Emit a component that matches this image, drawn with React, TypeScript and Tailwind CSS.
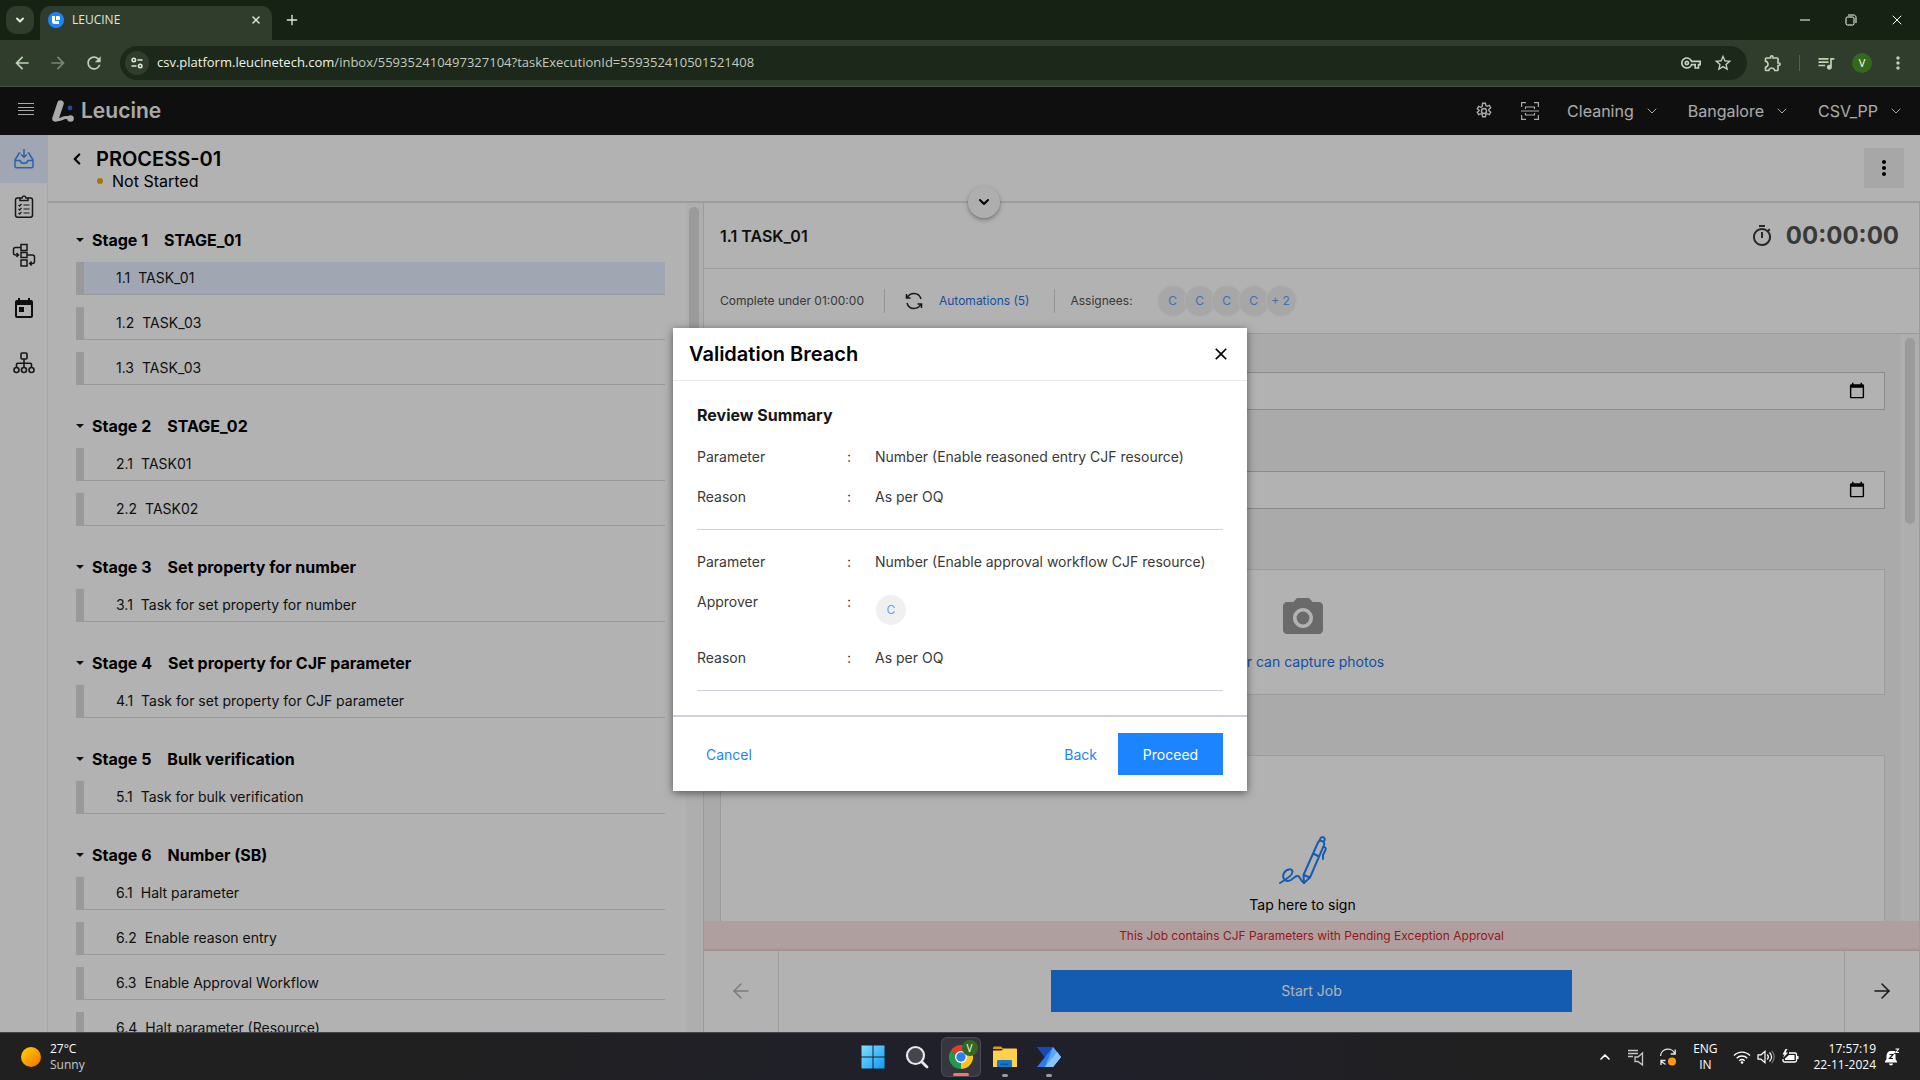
import { ReactNode } from "react";
import clsx from "clsx";
import {
  MdArrowBack,
  MdArrowForward,
  MdCameraAlt,
  MdClose,
  MdMoreVert,
  MdOutlineExtension,
  MdOutlineTimer,
  MdOutlineVpnKey,
  MdQueueMusic,
  MdRefresh,
  MdStarOutline,
  MdToday,
} from "react-icons/md";
import { ArrowLeft, ArrowRight, ChevronDown, ChevronLeft, ChevronUp, Minus, Plus, X } from "lucide-react";

type Task = { id: string; name: string };
type Stage = { title: string; name: string; tasks: Task[] };

const STAGES: Stage[] = [
  {
    title: "Stage 1",
    name: "STAGE_01",
    tasks: [
      { id: "1.1", name: "TASK_01" },
      { id: "1.2", name: "TASK_03" },
      { id: "1.3", name: "TASK_03" },
    ],
  },
  {
    title: "Stage 2",
    name: "STAGE_02",
    tasks: [
      { id: "2.1", name: "TASK01" },
      { id: "2.2", name: "TASK02" },
    ],
  },
  {
    title: "Stage 3",
    name: "Set property for number",
    tasks: [{ id: "3.1", name: "Task for set property for number" }],
  },
  {
    title: "Stage 4",
    name: "Set property for CJF parameter",
    tasks: [{ id: "4.1", name: "Task for set property for CJF parameter" }],
  },
  {
    title: "Stage 5",
    name: "Bulk verification",
    tasks: [{ id: "5.1", name: "Task for bulk verification" }],
  },
  {
    title: "Stage 6",
    name: "Number (SB)",
    tasks: [
      { id: "6.1", name: "Halt parameter" },
      { id: "6.2", name: "Enable reason entry" },
      { id: "6.3", name: "Enable Approval Workflow" },
      { id: "6.4", name: "Halt parameter (Resource)" },
    ],
  },
];

const ASSIGNEES = ["C", "C", "C", "C", "+ 2"];

function TabStrip() {
  return (
    <div className="flex h-10 items-end bg-[#162213] text-[#dfe8da]">
      <button
        type="button"
        aria-label="Search tabs"
        className="mb-[6px] ml-[6px] flex size-7 items-center justify-center rounded-[10px] bg-[#303d2d]"
      >
        <ChevronDown className="size-3" strokeWidth={4} />
      </button>
      <div className="ml-[6px] flex h-[34px] w-[232px] items-center rounded-t-[10px] bg-[#303d2d] pr-2 pb-[6px] pl-2">
        <svg viewBox="0 0 16 16" className="size-4">
          <circle cx="8" cy="8" r="8" fill="#1d84ff" />
          <path d="M4 4h3v5h4v3H6.500C5 12 4 11 4 9.500z" fill="#fff" />
          <path d="M8 4h2.200C11.500 4 12 4.600 12 6v2H8z" fill="#fff" />
        </svg>
        <span className="ml-2 flex-1 text-[12px]">LEUCINE</span>
        <button type="button" aria-label="Close tab" className="flex size-4 items-center justify-center">
          <X className="size-3" strokeWidth={3} />
        </button>
      </div>
      <button type="button" aria-label="New tab" className="mb-3 ml-3 flex size-4 items-center justify-center">
        <Plus className="size-4" strokeWidth={2} />
      </button>
      <div className="ml-auto flex h-10 items-center text-white">
        <button type="button" aria-label="Minimize" className="flex w-[46px] justify-center">
          <Minus className="size-4" strokeWidth={1.5} />
        </button>
        <button type="button" aria-label="Restore" className="flex w-[46px] justify-center">
          <svg viewBox="0 0 12 12" className="size-3" fill="none" stroke="currentColor" strokeWidth="1">
            <rect x="1" y="3" width="8" height="8" rx="1.500" />
            <path d="M3 1h5.500C10 1 11 2 11 3.500V9" />
          </svg>
        </button>
        <button type="button" aria-label="Close window" className="flex w-[46px] justify-center">
          <X className="size-4" strokeWidth={1.5} />
        </button>
      </div>
    </div>
  );
}

function Toolbar() {
  return (
    <div className="flex h-[47px] items-center border-b border-[#465343] bg-[#303d2d] pr-3 pl-3 text-[#bdd3b4]">
      <div className="flex items-center gap-4">
        <button type="button" aria-label="Back">
          <MdArrowBack className="size-5" />
        </button>
        <button type="button" aria-label="Forward" className="opacity-50">
          <MdArrowForward className="size-5" />
        </button>
        <button type="button" aria-label="Reload">
          <MdRefresh className="size-5" />
        </button>
      </div>
      <div className="ml-4 flex h-[34px] flex-1 items-center rounded-full bg-[#1c2819] pr-[14px] pl-[5px]">
        <button
          type="button"
          aria-label="View site information"
          className="flex size-6 items-center justify-center rounded-full bg-[#303d2d]"
        >
          <svg viewBox="0 0 14 14" className="size-[14px]" fill="none" stroke="#dfe8da" strokeWidth="1.600">
            <circle cx="3.800" cy="4" r="1.700" />
            <path d="M7.500 4h5M1.500 10h5" />
            <circle cx="10.200" cy="10" r="1.700" />
          </svg>
        </button>
        <p className="ml-2 flex-1 text-[13px] text-[#c3cbbf]">
          <span className="text-[#eef3ea]">csv.platform.leucinetech.com</span>
          /inbox/559352410497327104?taskExecutionId=559352410501521408
        </p>
        <div className="flex items-center gap-3 text-[#c6d2c0]">
          <button type="button" aria-label="Manage passwords">
            <MdOutlineVpnKey className="size-5" />
          </button>
          <button type="button" aria-label="Bookmark this tab">
            <MdStarOutline className="size-5" />
          </button>
        </div>
      </div>
      <div className="flex items-center pl-4">
        <button type="button" aria-label="Extensions">
          <MdOutlineExtension className="size-5" />
        </button>
        <span className="mx-4 h-4 w-px bg-[#51634c]" />
        <button type="button" aria-label="Media controls">
          <MdQueueMusic className="size-5" />
        </button>
        <button
          type="button"
          aria-label="Profile"
          className="mx-4 flex size-5 items-center justify-center rounded-full bg-[#33691e] text-[11px] text-white"
        >
          V
        </button>
        <button type="button" aria-label="Browser menu">
          <MdMoreVert className="size-5" />
        </button>
      </div>
    </div>
  );
}

function HeaderMenu({ label }: { label: string }) {
  return (
    <button type="button" className="flex items-center gap-[10px] text-[16px]">
      {label}
      <ChevronDown className="size-4" strokeWidth={1.5} />
    </button>
  );
}

function AppHeader() {
  return (
    <header className="flex h-12 shrink-0 items-center bg-[#161616] pr-4 pl-[18px] text-[#f4f4f4]">
      <button type="button" aria-label="Open menu">
        <svg viewBox="0 0 16 12" className="mb-1 h-3 w-4" fill="currentColor">
          <path d="M0 0h16v1H0zM0 4h16v1H0zM0 7h16v1H0zM0 11h16v1H0z" />
        </svg>
      </button>
      <div className="ml-[18px] flex items-center">
        <svg viewBox="0 0 22 22" className="size-[22px]">
          <path d="M8.500 3.500 3.500 18.500" stroke="#f4f4f4" strokeWidth="6.500" strokeLinecap="round" />
          <path d="M4 19.500C8 21.500 12 15 18 18.500" stroke="#f4f4f4" strokeWidth="3" fill="none" />
          <circle cx="18.500" cy="18.500" r="3.300" fill="#f4f4f4" />
          <circle cx="18" cy="8" r="2.400" fill="#2f6fe8" />
        </svg>
        <span className="ml-[7px] text-[21px] font-semibold">Leucine</span>
      </div>
      <div className="ml-auto flex items-center gap-7">
        <button type="button" aria-label="Settings">
          <svg viewBox="0 0 18 18" className="size-[18px]" fill="none" stroke="currentColor" strokeWidth="1.400">
            <path d="M7.600 1.200h2.800l.4 2.300 1.300.8 2.200-.9 1.400 2.500-1.800 1.400v1.400l1.800 1.400-1.400 2.500-2.200-.9-1.300.8-.4 2.300H7.600l-.4-2.300-1.300-.8-2.200.9-1.400-2.500 1.800-1.400V8.300L2.300 6.900l1.400-2.500 2.200.9 1.300-.8z" />
            <circle cx="9" cy="9" r="2.500" />
          </svg>
        </button>
        <button type="button" aria-label="Scan code">
          <svg viewBox="0 0 18 18" className="size-[18px]" fill="none" stroke="currentColor" strokeWidth="1.200">
            <path d="M.6 5V.6H5M13 .6h4.400V5M17.400 13v4.400H13M5 17.400H.6V13M0 9h18M4.500 7V5h9v2M4.500 11v2h9v-2" />
          </svg>
        </button>
        <HeaderMenu label="Cleaning" />
        <HeaderMenu label="Bangalore" />
        <HeaderMenu label="CSV_PP" />
      </div>
    </header>
  );
}

function SideNav() {
  return (
    <nav className="flex w-12 shrink-0 flex-col items-center border-r border-[#f0f0f0] bg-white text-[#222]">
      <a href="#inbox" aria-label="Inbox" className="flex h-12 w-full items-center justify-center bg-[#e5f0ff]">
        <svg viewBox="0 0 20 20" className="size-5" fill="none" stroke="#3d8df5" strokeWidth="1.500" strokeLinejoin="round">
          <path d="M6.500 4H5.200L1 11v6.500c0 .8.500 1.300 1.300 1.300h15.400c.8 0 1.300-.5 1.300-1.300V11l-4.200-7h-1.300" />
          <path d="M1 11.500h5c.5 2 2 2.800 4 2.800s3.500-.8 4-2.800h5M10 0v8M7.200 5.500 10 8.300l2.800-2.800" />
        </svg>
      </a>
      <a href="#jobs" aria-label="Jobs" className="flex h-12 w-full items-center justify-center">
        <svg viewBox="0 0 20 24" className="h-6 w-5" fill="none" stroke="currentColor" strokeWidth="1.500">
          <path d="M6 3H3.500C2 3 1.500 4 1.500 5v15c0 1.500.7 2.200 2 2.200h13c1.300 0 2-.7 2-2.200V5c0-1-.5-2-2-2H14" />
          <path d="M6 5.500V3h2c.3-1.500 1-2 2-2s1.700.5 2 2h2v2.500z" />
          <path d="M9.500 10h6M9.500 14h6M9.500 18h6M4.500 9.800l1.200 1.200 1.800-2.200M4.500 13.800 5.700 15l1.800-2.200M4.500 17.800 5.700 19l1.800-2.200" strokeWidth="1.200" />
        </svg>
      </a>
      <a href="#processes" aria-label="Processes" className="flex h-12 w-full items-center justify-center">
        <svg viewBox="0 0 24 24" className="size-6" fill="none" stroke="currentColor" strokeWidth="1.500">
          <path d="M9 1.500h6v6H9zM9 9.500h6v5H9zM9 17h6v6H9z" />
          <path d="M9 4.500H3.500C2 4.500 1.500 5 1.500 6.500V10c0 1.500.5 2 2 2H6M4.500 10l2 2-2 2M15 12h5.500c1.500 0 2 .5 2 2v4.500c0 1.500-.5 2-2 2H18M19.700 18.500l-2 2 2 2" />
        </svg>
      </a>
      <a href="#schedule" aria-label="Schedule" className="flex h-[60px] w-full items-center justify-center text-[#161616]">
        <MdToday className="size-6" />
      </a>
      <a href="#ontology" aria-label="Ontology" className="flex h-12 w-full items-center justify-center">
        <svg viewBox="0 0 22 22" className="size-[22px]" fill="none" stroke="currentColor" strokeWidth="1.600">
          <rect x="8" y="1" width="6" height="6" rx="1" />
          <path d="M11 7v8M3.500 15v-2.500c0-.8.4-1.200 1.200-1.200h12.600c.8 0 1.200.4 1.200 1.200V15" />
          <circle cx="3.500" cy="18" r="2.500" />
          <circle cx="11" cy="18" r="2.500" />
          <circle cx="18.500" cy="18" r="2.500" />
        </svg>
      </a>
    </nav>
  );
}

function JobHeader() {
  return (
    <div className="relative flex h-[68px] shrink-0 items-center justify-between border-b-2 border-[#e0e0e0] bg-white pr-4 pl-5 text-black">
      <div className="flex items-start pb-[3px]">
        <button type="button" aria-label="Go back" className="flex h-7 items-center">
          <ChevronLeft className="size-[18px]" strokeWidth={3} />
        </button>
        <div className="ml-[10px]">
          <h1 className="text-[20px] leading-7 font-semibold">PROCESS-01</h1>
          <p className="flex items-center gap-[9px] pl-px text-[16px] leading-4">
            <span className="size-[6px] rounded-full bg-[#f1a800]" />
            Not Started
          </p>
        </div>
      </div>
      <button type="button" aria-label="More actions" className="flex size-10 items-center justify-center bg-[#f0f0f0]">
        <MdMoreVert className="size-6" />
      </button>
      <button
        type="button"
        aria-label="Expand job details"
        className="absolute -bottom-[17px] left-1/2 z-10 flex size-8 -translate-x-1/2 items-center justify-center rounded-full bg-[#fafafa] shadow-[0_2px_4px_rgba(0,0,0,0.35)]"
      >
        <ChevronDown className="size-4" strokeWidth={3} />
      </button>
    </div>
  );
}

function StageList() {
  return (
    <div className="flex w-[656px] shrink-0 overflow-hidden bg-white">
      <div className="min-w-0 flex-1 pt-[26px] pr-[21px] pl-7">
        {STAGES.map((stage) => (
          <section key={stage.title} className="mb-[30px]">
            <h2 className="flex h-[22px] items-center text-[16px] font-bold text-black">
              <svg viewBox="0 0 8 4" className="h-1 w-2" fill="#161616">
                <path d="M0 0h8L4 4z" />
              </svg>
              <span className="ml-2">{stage.title}</span>
              <span className="ml-4">{stage.name}</span>
            </h2>
            <ul className="mt-[11px] flex flex-col gap-3">
              {stage.tasks.map((task) => (
                <li
                  key={task.id}
                  className={clsx(
                    "flex h-[33px] items-center gap-2 border-b border-l-8 border-[#dcdcdc] pb-px pl-8 text-[14px] text-[#161616]",
                    task.id === "1.1" && "bg-[#e5f0ff]"
                  )}
                >
                  <span>{task.id}</span>
                  <span>{task.name}</span>
                </li>
              ))}
            </ul>
          </section>
        ))}
      </div>
      <div className="w-[18px] shrink-0 border-r border-[#e0e0e0] bg-[#fafafa] pt-1 pl-[3px]">
        <div className="h-[360px] w-[10px] rounded-full bg-[#dedede]" />
      </div>
    </div>
  );
}

function Avatar({ children, className }: { children: ReactNode; className?: string }) {
  return (
    <span
      className={clsx(
        "flex items-center justify-center rounded-full bg-[#f0f0f0] text-[12px] text-[#5aa2ff]",
        className
      )}
    >
      {children}
    </span>
  );
}

function TaskPanel() {
  return (
    <main className="flex min-w-0 flex-1 flex-col border-r border-[#e0e0e0] bg-white">
      <div className="flex h-[66px] shrink-0 items-center justify-between border-b border-[#e0e0e0] px-4 pr-5">
        <h2 className="text-[16px] font-semibold text-[#161616]">1.1 TASK_01</h2>
        <div className="flex items-center gap-3 text-[#525252]">
          <MdOutlineTimer className="size-6 text-[#393939]" />
          <span className="text-[24px] font-bold">00:00:00</span>
        </div>
      </div>

      <div className="flex h-[65px] shrink-0 items-center border-b border-[#e0e0e0] px-4 text-[12px] text-[#525252]">
        <span>Complete under 01:00:00</span>
        <span className="mx-5 h-6 w-px bg-[#d5d5d5]" />
        <svg viewBox="0 0 18 18" className="size-[18px]" fill="none" stroke="#222" strokeWidth="1.500">
          <path d="M1.500 2v4h4M2 6c1.500-3 4-4.500 7-4.500 3.500 0 6 2 7 5.500M16.500 16v-4h-4M16 12c-1.500 3-4 4.500-7 4.500-3.500 0-6-2-7-5.500" />
        </svg>
        <a href="#automations" className="ml-4 text-[#1d72e8]">
          Automations (5)
        </a>
        <span className="mr-4 ml-6 h-6 w-px bg-[#d5d5d5]" />
        <span>Assignees:</span>
        <div className="ml-6 flex">
          {ASSIGNEES.map((name, i) => (
            <Avatar key={i} className="-mr-[5px] size-8 border border-[#fcfcfc]">
              {name}
            </Avatar>
          ))}
        </div>
      </div>

      <div className="flex min-h-0 flex-1 overflow-hidden bg-[#f4f4f4]">
        <div className="min-w-0 flex-1 px-4 pt-[38px]">
          <input
            type="date"
            aria-label="Date"
            className="block h-[38px] w-full border border-[#c6c6c6] bg-white px-4 text-[14px] [&::-webkit-calendar-picker-indicator]:size-[18px]"
          />
          <input
            type="date"
            aria-label="Date and time"
            className="mt-[61px] block h-[38px] w-full border border-[#c6c6c6] bg-white px-4 text-[14px] [&::-webkit-calendar-picker-indicator]:size-[18px]"
          />
          <div className="mt-[60px] flex h-[126px] flex-col items-center border border-[#e0e0e0] bg-white pt-6">
            <MdCameraAlt className="size-12 text-[#999]" />
            <p className="mt-[9px] text-[14px] text-[#1d72e8]">User can capture photos</p>
          </div>
          <div className="mt-[60px] flex h-[240px] flex-col items-center border border-[#e0e0e0] bg-white pt-20">
            <svg
              viewBox="0 0 48 48"
              className="size-12"
              fill="none"
              stroke="#1d84ff"
              strokeWidth="2"
              strokeLinecap="round"
              strokeLinejoin="round"
            >
              <path d="M1 47C8 43 14 39 13.500 35.500 13 32 7 33 5 37c-2 4 0 8 4 8 5 0 6-6 10-5 2 .5 2 4 6 7" />
              <path d="M25 47l-.5-8L39 6.500c1-2 2.500-2 4-1.300s3 2 2 4L31 41.500zM24.500 39l6.500 2.500M34 17.500l6 3M40 5.500l1.500-3c.5-1.500 2-1.700 3-1.200s1.500 1.700 1 3L44.500 6M45.500 11c1.500 1 1.500 2 1 3l-2.500 5v4" />
            </svg>
            <p className="mt-[10px] text-[14px] text-black">Tap here to sign</p>
          </div>
        </div>
        <div className="w-[18px] shrink-0 bg-[#fafafa] pt-1 pl-1">
          <div className="h-[186px] w-[10px] rounded-full bg-[#dedede]" />
        </div>
      </div>

      <div className="flex h-[30px] shrink-0 items-center justify-center bg-[#fde4e4] text-[12px] text-[#da1e28] shadow-[inset_0_-3px_3px_-2px_rgba(0,0,0,0.15)]">
        This Job contains CJF Parameters with Pending Exception Approval
      </div>
      <div className="flex h-[81px] shrink-0 items-stretch">
        <button
          type="button"
          aria-label="Previous task"
          className="flex w-[75px] items-center justify-center border-r border-[#e0e0e0] pb-[2px] text-[#b0b0b0]"
        >
          <ArrowLeft className="size-6" strokeWidth={1.5} />
        </button>
        <div className="flex flex-1 items-center justify-center pb-[2px]">
          <button type="button" className="h-[42px] w-[521px] bg-[#1d84ff] text-[14px] text-white">
            Start Job
          </button>
        </div>
        <button
          type="button"
          aria-label="Next task"
          className="flex w-[75px] items-center justify-center border-l border-[#e0e0e0] pb-[2px] text-[#222]"
        >
          <ArrowRight className="size-6" strokeWidth={1.5} />
        </button>
      </div>
    </main>
  );
}

function SummaryRow({ label, children }: { label: string; children: ReactNode }) {
  return (
    <div className="flex items-start leading-5">
      <dt className="w-[150px]">{label}</dt>
      <span className="w-7">:</span>
      <dd>{children}</dd>
    </div>
  );
}

function ValidationModal() {
  return (
    <div className="absolute inset-0 z-20 flex items-center justify-center bg-black/30">
      <div
        role="dialog"
        aria-labelledby="validation-title"
        className="w-[574px] bg-white shadow-[0_2px_8px_rgba(0,0,0,0.5)]"
      >
        <div className="flex h-[53px] items-center justify-between border-b border-[#e8e8e8] px-4">
          <h2 id="validation-title" className="text-[20px] font-semibold text-black">
            Validation Breach
          </h2>
          <button type="button" aria-label="Close">
            <MdClose className="size-5 text-black" />
          </button>
        </div>
        <div className="px-6 pt-[22px] pb-6 text-[14px] text-[#393939]">
          <h3 className="text-[16px] leading-6 font-bold text-[#161616]">Review Summary</h3>
          <dl className="mt-5 flex flex-col gap-5 border-b border-[#cdd2da] pb-[22px]">
            <SummaryRow label="Parameter">Number (Enable reasoned entry CJF resource)</SummaryRow>
            <SummaryRow label="Reason">As per OQ</SummaryRow>
          </dl>
          <dl className="mt-[22px] flex flex-col gap-5 border-b border-[#cdd2da] pb-[22px]">
            <SummaryRow label="Parameter">Number (Enable approval workflow CJF resource)</SummaryRow>
            <SummaryRow label="Approver">
              <Avatar className="my-[3px] ml-px size-[30px]">C</Avatar>
            </SummaryRow>
            <SummaryRow label="Reason">As per OQ</SummaryRow>
          </dl>
        </div>
        <div className="flex items-center justify-between border-t-2 border-[#cdd2da] px-6 py-4 text-[14px] text-[#1d84ff]">
          <button type="button" className="px-[9px]">
            Cancel
          </button>
          <div className="flex items-center gap-[21px]">
            <button type="button">Back</button>
            <button type="button" className="h-[42px] w-[105px] bg-[#1d84ff] text-white">
              Proceed
            </button>
          </div>
        </div>
      </div>
    </div>
  );
}

function TaskbarApp({ label, active, children }: { label: string; active?: boolean; children: ReactNode }) {
  return (
    <button
      type="button"
      aria-label={label}
      className={clsx(
        "relative flex h-10 w-10 items-center justify-center rounded-md",
        active && "border border-white/10 bg-white/10"
      )}
    >
      {children}
    </button>
  );
}

function Taskbar() {
  return (
    <footer className="flex h-12 shrink-0 items-center border-t border-[#45454a] bg-[linear-gradient(90deg,#202020_0%,#202020_20%,#20202a_45%,#20202a_58%,#202020_80%)] text-[12px] leading-4 text-white">
      <div className="flex flex-1 items-center pl-[21px]">
        <span className="size-5 rounded-full bg-linear-to-br from-[#ffd500] to-[#ee6a00]" />
        <div className="ml-[9px]">
          <p>27°C</p>
          <p className="text-[#c8c8c8]">Sunny</p>
        </div>
      </div>
      <div className="flex items-center gap-1">
        <TaskbarApp label="Start">
          <svg viewBox="0 0 24 24" className="size-6">
            <defs>
              <linearGradient id="win" x1="0" y1="0" x2="1" y2="1">
                <stop offset="0" stopColor="#7fe0ff" />
                <stop offset="1" stopColor="#1098f7" />
              </linearGradient>
            </defs>
            <path d="M.5.500H11.500v11H.5zM12.500.500h11v11h-11zM.5 12.500h11v11H.5zM12.500 12.500h11v11h-11z" fill="url(#win)" />
          </svg>
        </TaskbarApp>
        <TaskbarApp label="Search">
          <svg viewBox="0 0 24 24" className="size-6" fill="none" stroke="#e8e8ea" strokeLinecap="round">
            <circle cx="10.500" cy="10.500" r="8.500" strokeWidth="2.200" fill="#45454e" />
            <path d="M17.200 17.200 22 22" strokeWidth="2.800" />
          </svg>
        </TaskbarApp>
        <TaskbarApp label="Google Chrome" active>
          <svg viewBox="0 0 24 24" className="size-6">
            <path d="M12 12 1.600 6A12 12 0 0 1 22.400 6z" fill="#e33b2e" />
            <path d="M12 12V24A12 12 0 0 1 1.600 6z" fill="#229a48" />
            <path d="M12 12 22.400 6A12 12 0 0 1 12 24z" fill="#fcc31e" />
            <circle cx="12" cy="12" r="6" fill="#fff" />
            <circle cx="12" cy="12" r="4.700" fill="#2d7df0" />
          </svg>
          <span className="absolute top-[2px] right-[2px] flex size-4 items-center justify-center rounded-full bg-[#33691e] text-[10px]">
            V
          </span>
          <span className="absolute bottom-0 h-[3px] w-4 rounded-full bg-[#f5775f]" />
        </TaskbarApp>
        <TaskbarApp label="File Explorer">
          <svg viewBox="0 0 24 24" className="size-6">
            <path d="M0 3.500C0 2 .6 1.500 2 1.500h6l2.500 2.500H0z" fill="#e09a10" />
            <path d="M0 5.500h8.500L10.500 3.500H23c.7 0 1 .3 1 1V22H0z" fill="#ffd04a" />
            <path d="M4 22v-5.500c0-1 .5-1.500 1.500-1.500h12c1 0 1.500.5 1.500 1.500V22z" fill="#1278cc" />
            <path d="M7.500 18.500h8V20h-8z" fill="#0b559c" />
          </svg>
          <span className="absolute bottom-0 h-[3px] w-[6px] rounded-full bg-[#9a9aa0]" />
        </TaskbarApp>
        <TaskbarApp label="Power Automate">
          <svg viewBox="0 0 24 24" className="size-6">
            <path d="M0 2h16l8 10-8 10H0l8-10z" fill="#2b7af5" />
            <path d="M0 2h16l-8 10z" fill="#1748b8" />
            <path d="M16 2l8 10-8 10H8z" fill="#5ca8ff" />
            <path d="M16 2 0 22l8-10z" fill="#1e5bdc" />
            <path d="M20 7l4 5-8 10H8z" fill="#8ac4ff" />
          </svg>
          <span className="absolute bottom-0 h-[3px] w-[6px] rounded-full bg-[#9a9aa0]" />
        </TaskbarApp>
      </div>
      <div className="flex flex-1 items-center justify-end pr-5">
        <ChevronUp className="size-4" strokeWidth={2.5} />
        <svg viewBox="0 0 18 18" className="ml-[14px] size-[18px]" fill="none" stroke="#c8c8c8" strokeWidth="1.300">
          <path d="M1 2.500h10M1 5.500h10M1 8.500h5M8 9h3l4.500-4v12L11 13.500H8z" />
        </svg>
        <svg viewBox="0 0 18 18" className="ml-[14px] size-[18px]" fill="none" stroke="#e8e8e8" strokeWidth="1.300">
          <path d="M1.500 8A7.500 7.500 0 0 1 16 6M16.200 1.500V6h-4.500M6.500 12.500H2V17M2 12.500c1 1.800 2.500 3 4.500 3.800" />
          <circle cx="13" cy="13.500" r="4" fill="#ff9b0f" stroke="none" />
        </svg>
        <p className="ml-3 w-8 text-center">
          ENG
          <br />
          IN
        </p>
        <svg viewBox="0 0 18 18" className="ml-3 size-[18px]" fill="none" stroke="#fff" strokeWidth="1.400">
          <path d="M1 7.500c4.500-4.500 11.500-4.500 16 0M3.700 10.300c3-3 7.600-3 10.600 0M6.300 12.800c1.600-1.500 3.800-1.500 5.400 0" />
          <circle cx="9" cy="14.500" r="1.300" fill="#fff" stroke="none" />
        </svg>
        <svg viewBox="0 0 18 18" className="ml-[6px] size-[18px]" fill="none" stroke="#fff" strokeWidth="1.200">
          <path d="M1 6.800h3l4-3.500v11.400l-4-3.500H1zM10.300 6.500c1.300 1.500 1.300 3.500 0 5M12.500 4.500c2.500 2.700 2.500 6.300 0 9" />
          <path d="M14.700 2.800c3.300 3.700 3.300 8.700 0 12.400" stroke="#777" />
        </svg>
        <svg viewBox="0 0 18 18" className="ml-[6px] size-[18px]" fill="none" stroke="#fff" strokeWidth="1.300">
          <path d="M8 5h6c1 0 1.500.5 1.500 1.500v6c0 1-.5 1.500-1.500 1.500H3.500C2.500 14 2 13.500 2 12.500V11" />
          <path d="M8 7h5.500v5H4v-1.500zM16 8h1.500v3H16zM4.500 1 1.500 6.500h2L2 10l5-5.500H4.500L6.500 1z" fill="#fff" stroke="none" />
        </svg>
        <p className="ml-[14px] text-right">
          17:57:19
          <br />
          22-11-2024
        </p>
        <svg viewBox="0 0 16 18" className="ml-2 h-[18px] w-4">
          <path d="M7 3C4 3 2.500 5 2.500 8v3L1 13.500v1h12v-1L11.500 11V3z" fill="#fff" />
          <path d="M5 15.500h4c0 2.500-4 2.500-4 0z" fill="#fff" />
          <path d="M5.500 6.500h3.500l-3.500 4H9M10.500 1.500h3.500l-3 4h3" fill="none" stroke="#202020" strokeWidth="1.200" />
          <path d="M11.500 1h3L12 4.500h3" fill="none" stroke="#fff" strokeWidth="1.100" />
        </svg>
      </div>
    </footer>
  );
}

export default function App() {
  return (
    <div className="flex h-dvh flex-col overflow-hidden font-['Open_Sans',sans-serif]">
      <TabStrip />
      <Toolbar />
      <div className="relative flex min-h-0 flex-1 flex-col overflow-hidden font-['Inter',sans-serif]">
        <AppHeader />
        <div className="flex min-h-0 flex-1">
          <SideNav />
          <div className="flex min-w-0 flex-1 flex-col">
            <JobHeader />
            <div className="flex min-h-0 flex-1">
              <StageList />
              <TaskPanel />
            </div>
          </div>
        </div>
        <ValidationModal />
      </div>
      <Taskbar />
    </div>
  );
}
